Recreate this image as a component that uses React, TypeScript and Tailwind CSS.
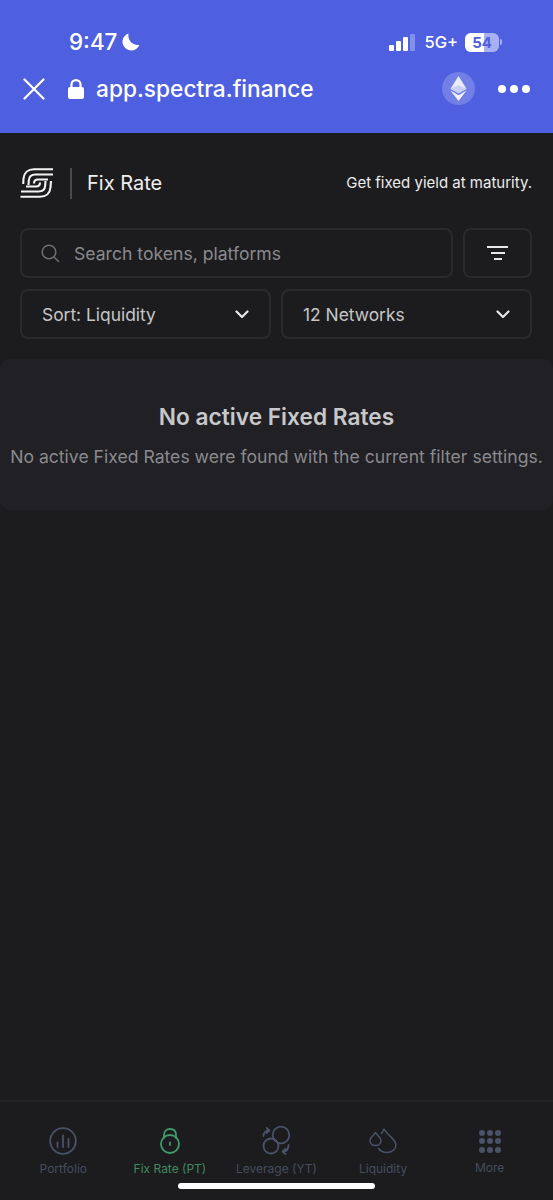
import React from "react";

const Logo = () => (
  <svg width="34" height="32" viewBox="0 0 34 32" fill="none" stroke="#f4f4f4" strokeWidth="2.1" strokeLinecap="butt">
    <path d="M33 2.300 H14 C8 2.300 4 6 3.500 11.500 L3.200 17" />
    <path d="M33 7.500 H15.500 C11.500 7.500 9 10 8.800 13.500 L8.500 18" />
    <path d="M28 12.500 H18 C15.500 12.500 14 14 14 16.500" />
    <path d="M0.500 29.700 H20 C26 29.700 30 26 30.500 20.500 L31 14" />
    <path d="M1 24.500 H18.500 C22.500 24.500 25 22 25.200 18.500 L25.500 14" />
    <path d="M6 19.500 H16 C18.500 19.500 20 18 20 15.500" />
  </svg>
);

const Chevron = () => (
  <svg width="14" height="9" viewBox="0 0 14 9" fill="none" stroke="#e8e8e8" strokeWidth="2.200" strokeLinecap="round" strokeLinejoin="round">
    <path d="M1.500 1.500 L7 7 L12.500 1.500" />
  </svg>
);

const NAV = "#4a5268";

const NavItem = ({ label, icon, active }: { label: string; icon: React.ReactNode; active?: boolean }) => (
  <div className="flex flex-col items-center">
    <div className="h-[32px] flex items-center justify-center">{icon}</div>
    <span className={`mt-[4px] text-[12px] leading-[16px] whitespace-nowrap ${active ? "text-[#3f8a63]" : "text-[#454c5e]"}`}>{label}</span>
  </div>
);

export default function App() {
  return (
    <div className="relative h-[1200px] w-[553px] overflow-hidden bg-[#1c1c1e] flex flex-col font-['Inter',sans-serif]">
      <header className="h-[133px] shrink-0 bg-[#4e60e0] text-white flex flex-col">
        <div className="mt-[28px] h-[28px] flex items-center pl-[69px] pr-[51px]">
          <span className="text-[22.400px] font-medium leading-[28px] w-[48px] whitespace-nowrap">9:47</span>
          <svg className="ml-[5px]" width="18" height="18" viewBox="0 0 18 18" fill="white">
            <path d="M6.500 0.500 C5.500 6.500 9.500 12.500 17.500 12 C15.800 15.500 12.800 17.500 9.500 17.500 C4.500 17.500 0.500 13.500 0.500 8.800 C0.500 5 3 1.800 6.500 0.500 Z" />
          </svg>
          <div className="ml-auto flex items-center">
            <div className="flex items-end gap-[2px] h-[17px]">
              <span className="w-[5px] h-[6px] rounded-[1px] bg-white" />
              <span className="w-[5px] h-[10px] rounded-[1px] bg-white" />
              <span className="w-[5px] h-[14px] rounded-[1px] bg-white" />
              <span className="w-[5px] h-[17px] rounded-[1px] bg-white/30" />
            </div>
            <span className="ml-[9px] text-[16.500px] leading-[20px] font-medium">5G+</span>
            <div className="ml-[7px] relative flex h-[19px] w-[34px] rounded-[6px] overflow-hidden bg-white/50 items-center justify-center">
              <span className="absolute left-0 top-0 h-full w-[19px] bg-white" />
              <span className="relative text-[15px] leading-[19px] font-bold text-[#4e60e0]">54</span>
            </div>
            <span className="ml-[1px] h-[6px] w-[2px] rounded-r-[2px] bg-white/50" />
          </div>
        </div>
        <div className="mt-[16px] h-[33px] flex items-center pl-[23px] pr-[23px]">
          <svg width="22" height="22" viewBox="0 0 22 22" fill="none" stroke="white" strokeWidth="2.200" strokeLinecap="round">
            <path d="M1.500 1.500 L20.500 20.500 M20.500 1.500 L1.500 20.500" />
          </svg>
          <svg className="ml-[22px]" width="18" height="20" viewBox="0 0 18 20" fill="white">
            <path d="M4.500 8 V5.500 C4.500 3 6.500 1.200 9 1.200 C11.500 1.200 13.500 3 13.500 5.500 V8" fill="none" stroke="white" strokeWidth="2.200" />
            <rect x="1" y="8" width="16" height="12" rx="2" />
          </svg>
          <span className="ml-[11px] text-[22.700px] leading-[30px] font-medium">app.spectra.finance</span>
          <div className="ml-auto mr-[23px] h-[33px] w-[33px] rounded-full bg-white/20 flex items-center justify-center">
            <svg width="17" height="25" viewBox="0 0 17 25">
              <path d="M8.500 0 L0.500 12.800 L8.500 17.300 L16.500 12.800 Z" fill="#ffffff" fillOpacity="0.85" />
              <path d="M0.500 12.800 L8.500 9.200 L16.500 12.800 L8.500 17.300 Z" fill="#c9cff5" />
              <path d="M0.500 14.600 L8.500 25 L16.500 14.600 L8.500 19.200 Z" fill="#ffffff" fillOpacity="0.9" />
            </svg>
          </div>
          <div className="flex gap-[4px]">
            <span className="h-[8px] w-[8px] rounded-full bg-white" />
            <span className="h-[8px] w-[8px] rounded-full bg-white" />
            <span className="h-[8px] w-[8px] rounded-full bg-white" />
          </div>
        </div>
      </header>

      <main className="flex-1 flex flex-col">
        <div className="mt-[34px] h-[32px] flex items-center pl-[20px] pr-[21px]">
          <Logo />
          <span className="ml-[16px] h-[31px] w-[2px] bg-[#4a4a4c]" />
          <span className="ml-[15px] text-[20px] leading-[28px] text-[#efefef]">Fix Rate</span>
          <span className="ml-auto text-[15px] leading-[20px] text-[#ececec]">Get fixed yield at maturity.</span>
        </div>

        <div className="mt-[29px] pl-[20px] pr-[21px] flex flex-col gap-[11px]">
          <div className="flex gap-[10px]">
            <div className="h-[50px] flex-1 rounded-[8px] border-2 border-[#2a2a2d] flex items-center pl-[19px]">
              <svg width="19" height="19" viewBox="0 0 19 19" fill="none" stroke="#6e6e72" strokeWidth="1.500" strokeLinecap="round">
                <circle cx="8" cy="8" r="6.800" />
                <path d="M13 13 L17.500 17.500" />
              </svg>
              <span className="ml-[14px] pt-[2px] text-[17.600px] leading-[24px] text-[#8a8a8e]">Search tokens, platforms</span>
            </div>
            <div className="h-[50px] w-[69px] rounded-[8px] border-2 border-[#2a2a2d] flex flex-col items-center justify-center gap-[4px]">
              <span className="h-[2px] w-[21px] bg-[#e8e8e8]" />
              <span className="h-[2px] w-[14px] bg-[#e8e8e8]" />
              <span className="h-[2px] w-[8px] bg-[#e8e8e8]" />
            </div>
          </div>
          <div className="flex gap-[10px]">
            <div className="h-[50px] flex-1 rounded-[8px] border-2 border-[#2a2a2d] flex items-center justify-between pl-[20px] pr-[20px]">
              <span className="pt-[2px] text-[17.400px] leading-[24px] text-[#c6c6c8]">Sort: Liquidity</span>
              <Chevron />
            </div>
            <div className="h-[50px] flex-1 rounded-[8px] border-2 border-[#2a2a2d] flex items-center justify-between pl-[20px] pr-[20px]">
              <span className="pt-[2px] text-[17.400px] leading-[24px] text-[#c6c6c8]">12 Networks</span>
              <Chevron />
            </div>
          </div>
        </div>

        <section className="mt-[20px] h-[151px] rounded-[10px] bg-[#212125] flex flex-col items-center">
          <h2 className="mt-[43px] text-[22.700px] leading-[30px] font-semibold text-[#c8c8ca]">No active Fixed Rates</h2>
          <p className="mt-[13px] text-[17.600px] leading-[24px] text-[#8a8a8e] whitespace-nowrap">No active Fixed Rates were found with the current filter settings.</p>
        </section>
      </main>

      <nav className="h-[100px] shrink-0 border-t-2 border-[#252528] grid grid-cols-5 px-[10px] pt-[23px]">
        <NavItem
          label="Portfolio"
          icon={
            <svg width="28" height="28" viewBox="0 0 28 28" fill="none" stroke={NAV} strokeWidth="1.800" strokeLinecap="round">
              <circle cx="14" cy="14" r="12.800" />
              <path d="M8.500 15.500 V20 M14 8.500 V20 M19.500 12 V20" />
            </svg>
          }
        />
        <NavItem
          active
          label="Fix Rate (PT)"
          icon={
            <svg width="20" height="26" viewBox="0 0 20 26" fill="none" stroke="#3f9a6c" strokeWidth="1.800" strokeLinecap="round">
              <path d="M4 10 V7 C4 3.200 6.500 1 10 1 C13.500 1 16 3.200 16 7 V10" />
              <circle cx="10" cy="16" r="9" />
              <path d="M10 14.500 V17" />
            </svg>
          }
        />
        <NavItem
          label="Leverage (YT)"
          icon={
            <svg width="30" height="30" viewBox="0 0 30 30" fill="none" stroke={NAV} strokeWidth="1.800" strokeLinecap="round" strokeLinejoin="round">
              <circle cx="10" cy="20" r="7.500" />
              <circle cx="20" cy="9" r="8.300" />
              <path d="M2.500 10 C2.500 7 4.500 4.500 8 4.500 M5.500 1.800 L8.500 4.500 L5.500 7.200" />
              <path d="M27.500 19 C27.500 23 25.500 25.500 22 25.500 M24.500 22.800 L21.500 25.500 L24.500 28.200" />
            </svg>
          }
        />
        <NavItem
          label="Liquidity"
          icon={
            <svg width="28" height="26" viewBox="0 0 28 26" fill="none" stroke={NAV} strokeWidth="1.500" strokeLinecap="round" strokeLinejoin="round">
              <path d="M6.500 4.500 C4.500 7.500 1 9.500 1 12.500 C1 15.500 3.500 17.500 6.500 17.500 C9.500 17.500 12 15.500 12 12.500 C12 9.500 8.500 7.500 6.500 4.500 Z" />
              <path d="M12.500 5.500 C13.500 4 14.500 2.500 15 1 C18 7 27 11 27 17 C27 21.500 22.500 24.500 18 24.500 C14 24.500 11 22.500 9.500 20.500" />
            </svg>
          }
        />
        <div className="flex flex-col items-center">
          <div className="grid grid-cols-3 gap-x-[2px] gap-y-[2.500px] h-[32px] content-center">
            {Array.from({ length: 9 }).map((_, i) => (
              <span key={i} className="h-[6px] w-[6px] rounded-full bg-[#4a5268]" />
            ))}
          </div>
          <span className="mt-[3px] text-[12px] leading-[16px] text-[#454c5e]">More</span>
        </div>
      </nav>

      <div className="absolute left-[178px] top-[1183px] h-[6px] w-[197px] rounded-full bg-white" />
    </div>
  );
}
